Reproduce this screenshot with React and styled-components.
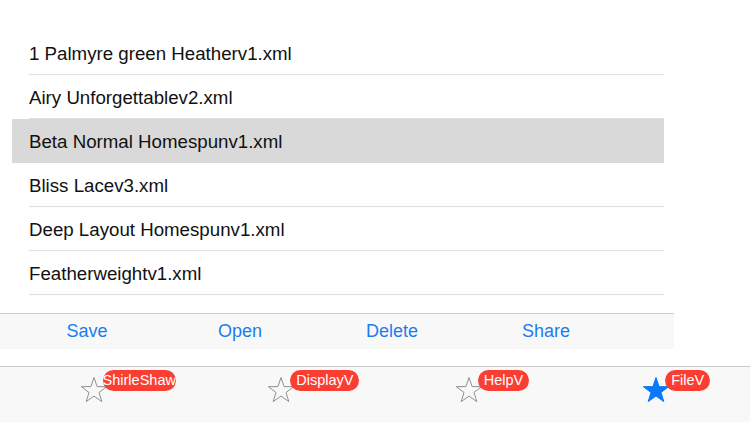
import React from 'react';
import styled, { createGlobalStyle } from 'styled-components';

const files = [
  '1 Palmyre green Heatherv1.xml',
  'Airy Unforgettablev2.xml',
  'Beta Normal Homespunv1.xml',
  'Bliss Lacev3.xml',
  'Deep Layout Homespunv1.xml',
  'Featherweightv1.xml',
];

const actions = ['Save', 'Open', 'Delete', 'Share'];

const tabs = [
  { label: 'ShirleShaw', active: false },
  { label: 'DisplayV', active: false },
  { label: 'HelpV', active: false },
  { label: 'FileV', active: true },
];

const GlobalStyle = createGlobalStyle`
  html, body {
    margin: 0;
    padding: 0;
    background: #ffffff;
    font-family: "Liberation Sans", Arial, sans-serif;
  }
`;

const Screen = styled.div`
  width: 750px;
  height: 422px;
  display: flex;
  flex-direction: column;
  overflow: hidden;
`;

const FileList = styled.ul`
  list-style: none;
  margin: 31px 0 0 12px;
  padding: 0;
  width: 652px;
`;

const Row = styled.li`
  height: 44px;
  box-sizing: border-box;
  padding: 1px 0 0 17px;
  display: flex;
  align-items: center;
  font-size: 18.7px;
  color: #111;
  background: ${p => (p.selected ? '#d9d9d9' : 'transparent')};
  position: relative;

  &::after {
    content: '';
    position: absolute;
    left: 17px;
    right: 0;
    bottom: 0;
    height: 1px;
    background: ${p => (p.selected ? 'transparent' : '#e0e0e0')};
  }
`;

const Toolbar = styled.div`
  margin-top: 18px;
  width: 674px;
  height: 36px;
  box-sizing: border-box;
  border-top: 1px solid #cfcfcf;
  background: #f8f8f8;
  padding-left: 12px;
  display: grid;
  grid-template-columns: 150px 156px 148px 160px;
  align-items: center;
`;

const ActionButton = styled.button`
  border: none;
  background: none;
  padding: 0;
  font-family: inherit;
  font-size: 18px;
  color: #1b7cf2;
  text-align: center;
  cursor: pointer;
`;

const TabBar = styled.nav`
  margin-top: 17px;
  height: 56px;
  box-sizing: border-box;
  border-top: 1px solid #c9c9c9;
  background: #f8f8f8;
  display: grid;
  grid-template-columns: repeat(4, 1fr);
`;

const Tab = styled.div`
  display: flex;
  justify-content: center;
  padding-top: 8px;
`;

const IconWrap = styled.div`
  position: relative;
  width: 30px;
  height: 30px;
`;

const Badge = styled.span`
  position: absolute;
  left: 24px;
  top: -5px;
  height: 21px;
  max-width: 73px;
  padding: 0 6px;
  box-sizing: border-box;
  border-radius: 11px;
  background: #fc3d32;
  color: #fff;
  font-size: 14.5px;
  line-height: 21px;
  white-space: nowrap;
  display: flex;
  justify-content: center;
  overflow: hidden;
`;

function Star({ active }) {
  return (
    <svg width="30" height="30" viewBox="0 0 30 30">
      <path
        d="M15 2.5 L18.1 11.6 L27.6 11.7 L20 17.5 L22.8 26.6 L15 21.1 L7.2 26.6 L10 17.5 L2.4 11.7 L11.9 11.6 Z"
        fill={active ? '#0a79f7' : 'none'}
        stroke={active ? '#0a79f7' : '#8f8f8f'}
        strokeWidth="1"
        strokeLinejoin="miter"
      />
    </svg>
  );
}

export default function App() {
  return (
    <>
      <GlobalStyle />
      <Screen>
        <FileList>
          {files.map((name, i) => (
            <Row key={name} selected={i === 2}>
              {name}
            </Row>
          ))}
        </FileList>

        <Toolbar>
          {actions.map(a => (
            <ActionButton key={a} type="button">
              {a}
            </ActionButton>
          ))}
        </Toolbar>

        <TabBar>
          {tabs.map(t => (
            <Tab key={t.label}>
              <IconWrap>
                <Star active={t.active} />
                <Badge>{t.label}</Badge>
              </IconWrap>
            </Tab>
          ))}
        </TabBar>
      </Screen>
    </>
  );
}
